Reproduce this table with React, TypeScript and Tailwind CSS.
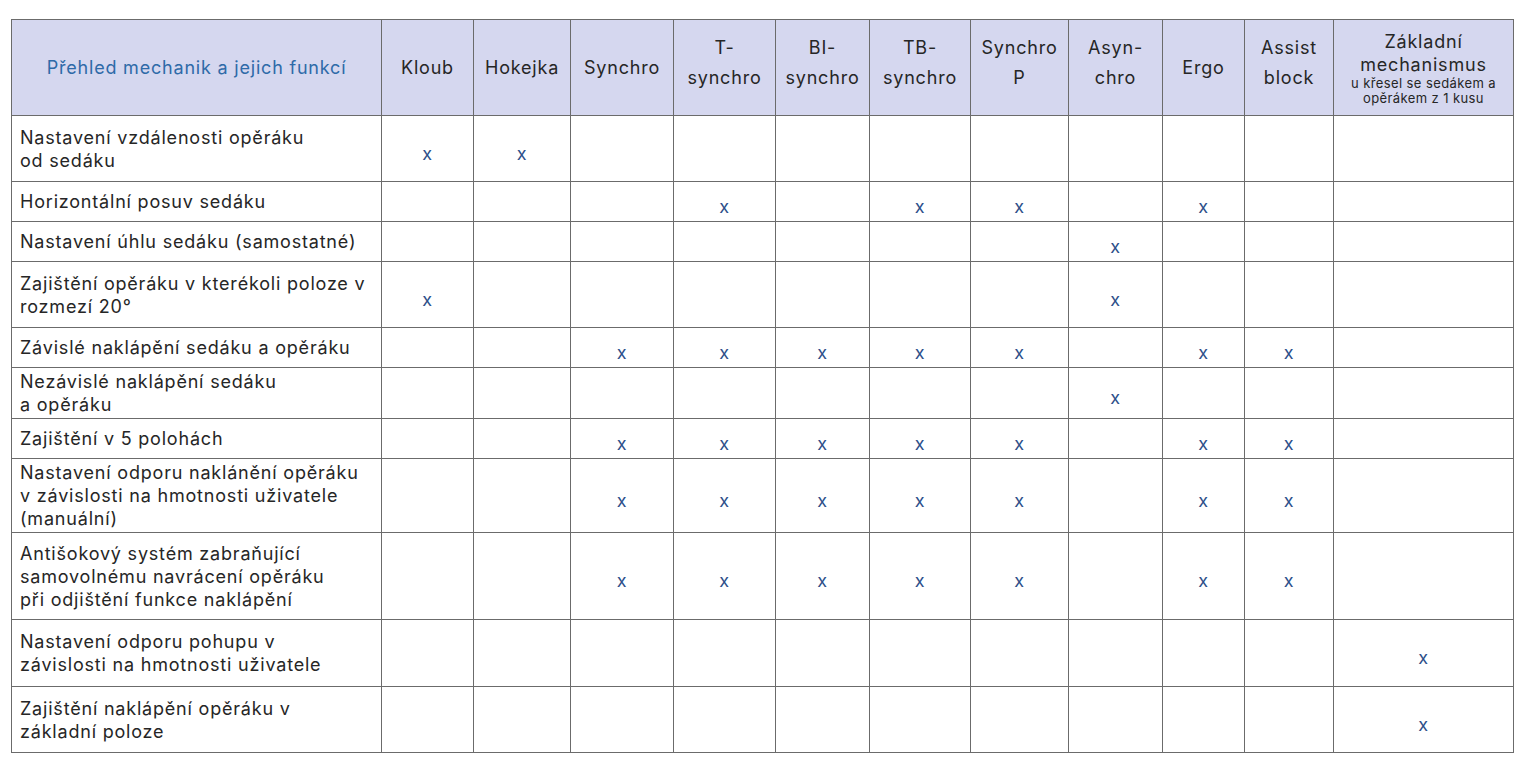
import React from "react";

const cols = [
  { key: "kloub", label: ["Kloub"], w: "w-[92px]" },
  { key: "hokejka", label: ["Hokejka"], w: "w-[97px]" },
  { key: "synchro", label: ["Synchro"], w: "w-[103px]" },
  { key: "t", label: ["T-", "synchro"], w: "w-[102px]" },
  { key: "bi", label: ["BI-", "synchro"], w: "w-[94px]" },
  { key: "tb", label: ["TB-", "synchro"], w: "w-[101px]" },
  { key: "sp", label: ["Synchro", "P"], w: "w-[98px]" },
  { key: "asyn", label: ["Asyn-", "chro"], w: "w-[94px]" },
  { key: "ergo", label: ["Ergo"], w: "w-[82px]" },
  { key: "assist", label: ["Assist", "block"], w: "w-[89px]" },
];

const heavy = ["synchro", "t", "bi", "tb", "sp", "ergo", "assist"];

const rows: { label: string[]; h: string; marks: string[] }[] = [
  { label: ["Nastavení vzdálenosti opěráku", "od sedáku"], h: "h-[66px]", marks: ["kloub", "hokejka"] },
  { label: ["Horizontální posuv sedáku"], h: "h-[40px]", marks: ["t", "tb", "sp", "ergo"] },
  { label: ["Nastavení úhlu sedáku (samostatné)"], h: "h-[40px]", marks: ["asyn"] },
  { label: ["Zajištění opěráku v kterékoli poloze v", "rozmezí 20°"], h: "h-[66px]", marks: ["kloub", "asyn"] },
  { label: ["Závislé naklápění sedáku a opěráku"], h: "h-[40px]", marks: heavy },
  { label: ["Nezávislé naklápění sedáku", "a opěráku"], h: "h-[51px]", marks: ["asyn"] },
  { label: ["Zajištění v 5 polohách"], h: "h-[40px]", marks: heavy },
  {
    label: ["Nastavení odporu naklánění opěráku", "v závislosti na hmotnosti uživatele", "(manuální)"],
    h: "h-[74px]",
    marks: heavy,
  },
  {
    label: ["Antišokový systém zabraňující", "samovolnému navrácení opěráku", "při odjištění funkce naklápění"],
    h: "h-[87px]",
    marks: heavy,
  },
  { label: ["Nastavení odporu pohupu v", "závislosti na hmotnosti uživatele"], h: "h-[67px]", marks: ["zakladni"] },
  { label: ["Zajištění naklápění opěráku v", "základní poloze"], h: "h-[66px]", marks: ["zakladni"] },
];

function Lines({ lines }: { lines: string[] }) {
  return (
    <>
      {lines.map((l, i) => (
        <React.Fragment key={i}>
          {i > 0 && <br />}
          {l}
        </React.Fragment>
      ))}
    </>
  );
}

function Mark({ on }: { on: boolean }) {
  return (
    <td className="border border-[#6b6b6b] pt-[9px] text-center text-[#2d4f8a]">{on ? "x" : ""}</td>
  );
}

export default function App() {
  return (
    <main className="min-h-screen w-full bg-white pt-[19px] pl-[11px] font-['Inter',sans-serif] text-[#262626]">
      <table className="table-fixed border-collapse w-[1502px] text-[18px] leading-[23px] tracking-[0.8px]">
        <colgroup>
          <col className="w-[370px]" />
          {cols.map((c) => (
            <col key={c.key} className={c.w} />
          ))}
          <col className="w-[180px]" />
        </colgroup>

        <thead>
          <tr className="h-[96px] bg-[#d5d7ef]">
            <th className="border border-[#6b6b6b] font-normal text-[#2e6aa8]">
              Přehled mechanik a jejich funkcí
            </th>
            {cols.map((c) => (
              <th
                key={c.key}
                className={
                  c.label.length > 1
                    ? "border border-[#6b6b6b] pb-[10px] font-normal leading-[30px]"
                    : "border border-[#6b6b6b] font-normal"
                }
              >
                <Lines lines={c.label} />
              </th>
            ))}
            <th className="border border-[#6b6b6b] font-normal">
              <div className="leading-[23px]">
                Základní
                <br />
                mechanismus
              </div>
              <div className="text-[13px] leading-[15px] tracking-[0.4px]">
                u křesel se sedákem a
                <br />
                opěrákem z 1 kusu
              </div>
            </th>
          </tr>
        </thead>

        <tbody>
          {rows.map((r, i) => (
            <tr key={i} className={r.h}>
              <td className="border border-[#6b6b6b] px-[8px] align-middle">
                <Lines lines={r.label} />
              </td>
              {cols.map((c) => (
                <Mark key={c.key} on={r.marks.includes(c.key)} />
              ))}
              <Mark on={r.marks.includes("zakladni")} />
            </tr>
          ))}
        </tbody>
      </table>
    </main>
  );
}
